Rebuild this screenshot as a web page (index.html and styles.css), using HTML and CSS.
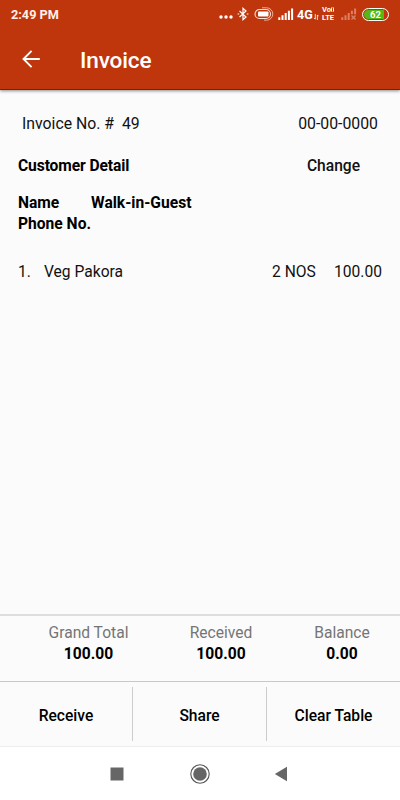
FILE: index.html
```html
<!DOCTYPE html>
<html lang="en">
<head>
    <meta charset="UTF-8">
    <meta name="viewport" content="width=device-width, initial-scale=1.0">
    <title>Invoice</title>
    <link rel="stylesheet" href="styles.css">
</head>
<body>
    <!-- Header -->
    <header>
        <div class="status-bar">
            <span class="time">2:49 PM</span>
            <div class="status-icons">
                <svg class="dots" width="14" height="16" viewBox="0 0 14 16" fill="#fff">
                    <circle cx="2" cy="11" r="1.7"/><circle cx="7" cy="11" r="1.7"/><circle cx="12" cy="11" r="1.7"/>
                </svg>
                <svg class="bluetooth" width="12" height="14" viewBox="0 0 12 14" fill="none" stroke="#fff" stroke-width="1.2">
                    <path d="M2.5 4L9 10L6 12.7V1.3L9 4L2.5 10"/>
                    <path d="M.6 7h1.6M9.8 7h1.6"/>
                </svg>
                <svg class="toggle" width="20" height="14" viewBox="0 0 20 14">
                    <rect x="4" y="4.5" width="10.5" height="5" rx=".8" fill="#fff"/>
                    <path d="M5.5 2.5H12a4.5 4.5 0 0 1 0 9H5.5a4.5 4.5 0 0 1 0-9z" fill="none" stroke="#fbe0d8" stroke-width="1.1"/>
                    <path d="M8 .8h4.6a6.2 6.2 0 0 1 0 12.4H10" fill="none" stroke="#f0b8a8" stroke-width=".9"/>
                </svg>
                <svg class="signal" width="16" height="12" viewBox="0 0 16 12" fill="#fff">
                    <path d="M.3 9.3h2V12h-2zM3.5 7.3h2V12h-2zM6.7 5h2v7h-2zM9.9 2.8h2V12h-2zM13.1.5h2V12h-2z"/>
                </svg>
                <span class="network">4G</span>
                <svg class="arrows" width="5" height="6" viewBox="0 0 5 6" fill="none" stroke="#fff" stroke-width=".8">
                    <path d="M1.3 0v5M0 4l1.3 1.3M3.4 6V1M3.4 1l1.3 1.3"/>
                </svg>
                <span class="volte"><span>Vo<i></i></span><span>LTE</span></span>
                <svg class="no-signal" width="16" height="12" viewBox="0 0 16 12" fill="#dc8064">
                    <path d="M.3 9.3h2V12h-2zM3.5 7.3h2V12h-2zM6.7 5h2v7h-2zM9.9 2.8h2v3.4h-2zM13.1.5h2v5.7h-2z"/>
                    <path d="M10.5 7.5l4 4M14.5 7.5l-4 4" stroke="#dc8064" stroke-width="1.4"/>
                </svg>
                <span class="battery">62</span>
            </div>
        </div>
        <div class="toolbar">
            <svg width="18" height="18" viewBox="0 0 18 18" fill="none" stroke="#fff" stroke-width="1.9">
                <path d="M17.8 9H1.5M9.6 .9L1.5 9l8.1 8.1"/>
            </svg>
            <h1>Invoice</h1>
        </div>
    </header>

    <!-- Invoice and customer details -->
    <main>
        <div class="row invoice-row">
            <span class="invoice-no">Invoice No. #&nbsp; 49</span>
            <span>00-00-0000</span>
        </div>
        <div class="row customer-row">
            <b class="customer-title">Customer Detail</b>
            <span class="change">Change</span>
        </div>
        <dl class="customer">
            <dt class="name-label">Name</dt>
            <dd class="guest">Walk-in-Guest</dd>
            <dt class="phone-label">Phone No.</dt>
            <dd></dd>
        </dl>
        <div class="item">
            <span>1.</span>
            <span class="item-name">Veg Pakora</span>
            <span class="qty">2 NOS</span>
            <span class="price">100.00</span>
        </div>
    </main>

    <!-- Totals -->
    <section class="totals">
        <div><span class="total-label">Grand Total</span><b>100.00</b></div>
        <div><span class="total-label">Received</span><b>100.00</b></div>
        <div><span class="total-label">Balance</span><b>0.00</b></div>
    </section>

    <!-- Actions -->
    <section class="actions">
        <button>Receive</button>
        <button>Share</button>
        <button>Clear Table</button>
    </section>

    <!-- Navigation bar -->
    <nav>
        <svg width="14" height="14" viewBox="0 0 14 14"><path d="M.5.5h13v13H.5z" fill="#666"/></svg>
        <svg width="20" height="20" viewBox="0 0 20 20">
            <circle cx="10" cy="10" r="9.2" fill="none" stroke="#555" stroke-width="1.1"/>
            <circle cx="10" cy="10" r="6.8" fill="#666"/>
        </svg>
        <svg width="14" height="16" viewBox="0 0 14 16"><path d="M.8 8L13 .8v14.4z" fill="#666"/></svg>
    </nav>
</body>
</html>
```

FILE: styles.css
```css
* {
    box-sizing: border-box;
}

body {
    font-family: Roboto, sans-serif;
    font-size: 15.6px;
    line-height: 21px;
    color: #111;
    background-color: #fbfbfb;
    margin: 0;
    height: 800px;
    display: flex;
    flex-direction: column;
    overflow: hidden;
}

b {
    font-weight: 700;
    color: #000;
}

header {
    height: 90px;
    background-color: #c0360c;
    border-bottom: 1px solid #b80008;
    color: white;
    box-shadow: 0 1px 3px rgba(0, 0, 0, 0.45);
}

.status-bar {
    height: 28px;
    padding: 0 11px;
    display: flex;
    align-items: center;
    justify-content: space-between;
}

.time {
    font-size: 12.7px;
    font-weight: 700;
    color: #fff0eb;
}

.status-icons {
    display: flex;
    align-items: center;
}

.dots {
    margin-right: 4px;
}

.bluetooth {
    margin-right: 5px;
}

.toggle {
    margin-right: 4px;
}

.network {
    width: 17px;
    font-size: 12.5px;
    font-weight: 700;
    margin-left: 3px;
}

.arrows {
    margin: 5px 3px 0 0;
}

.volte {
    width: 14px;
    display: flex;
    flex-direction: column;
    font-size: 7.5px;
    line-height: 6.5px;
    font-weight: 700;
    margin-right: 5px;
}

.volte span {
    height: 6.5px;
    white-space: nowrap;
}

/* LTE line sits just below the Vo line */
.volte span + span {
    margin-top: 1px;
}

.volte i {
    display: inline-block;
    width: 3px;
    height: 5px;
    border-left: 1px solid #fff;
    border-right: 1px solid #fff;
    border-radius: 2px;
}

.battery {
    width: 27px;
    height: 13px;
    margin-left: 5px;
    border: 1.5px solid #fff;
    border-radius: 7px;
    background: linear-gradient(90deg, #55b814 84%, #c0360c 84%);
    background-clip: padding-box;
    box-shadow: inset 0 0 0 1px #c0360c;
    font-size: 9.5px;
    font-weight: 700;
    line-height: 11px;
    text-align: center;
}

.toolbar {
    height: 61px;
    padding: 3px 22px 0;
    display: flex;
    align-items: center;
    gap: 40px;
}

.toolbar svg {
    margin-top: -3px;
}

h1 {
    font-size: 22.6px;
    font-weight: 500;
    letter-spacing: -0.15px;
    margin: 0;
}

main {
    flex: 1;
    padding: 23px 18px 0;
}

.row {
    display: flex;
    justify-content: space-between;
}

.invoice-row {
    padding: 0 4px;
    margin-bottom: 22px;
    font-size: 15.8px;
}

.customer-row {
    padding-right: 22px;
    margin-bottom: 16px;
}

.customer-title {
    letter-spacing: -0.1px;
}

.change {
    font-weight: 500;
}

.customer {
    display: grid;
    grid-template-columns: 73px 1fr;
    margin: 0 0 27px;
    font-weight: 700;
    color: #000;
}

dt {
    white-space: nowrap;
}

dd {
    margin: 0;
}

.item {
    display: grid;
    grid-template-columns: 26px 1fr 62px 48px;
}

.totals {
    height: 67px;
    padding: 7px 3px 0 22px;
    display: grid;
    grid-template-columns: 133px 132px 1fr;
    border-top: 2px solid #ddd;
    text-align: center;
}

.totals div {
    display: flex;
    flex-direction: column;
}

.total-label {
    color: #757575;
}

.actions {
    height: 66px;
    padding: 5px 0;
    display: grid;
    grid-template-columns: 133px 134px 1fr;
    border-top: 1px solid #c8c8c8;
    border-bottom: 1px solid #eee;
}

button {
    padding: 4px 0 0;
    border: none;
    border-right: 1px solid #ccc;
    background: none;
    font: inherit;
    font-weight: 500;
    color: #000;
}

button:last-child {
    border-right: none;
}

nav {
    height: 53px;
    background-color: white;
    display: flex;
    align-items: center;
    justify-content: center;
    gap: 66px;
}

nav svg:last-child {
    margin-left: -2px;
    margin-right: 2px;
}
```
